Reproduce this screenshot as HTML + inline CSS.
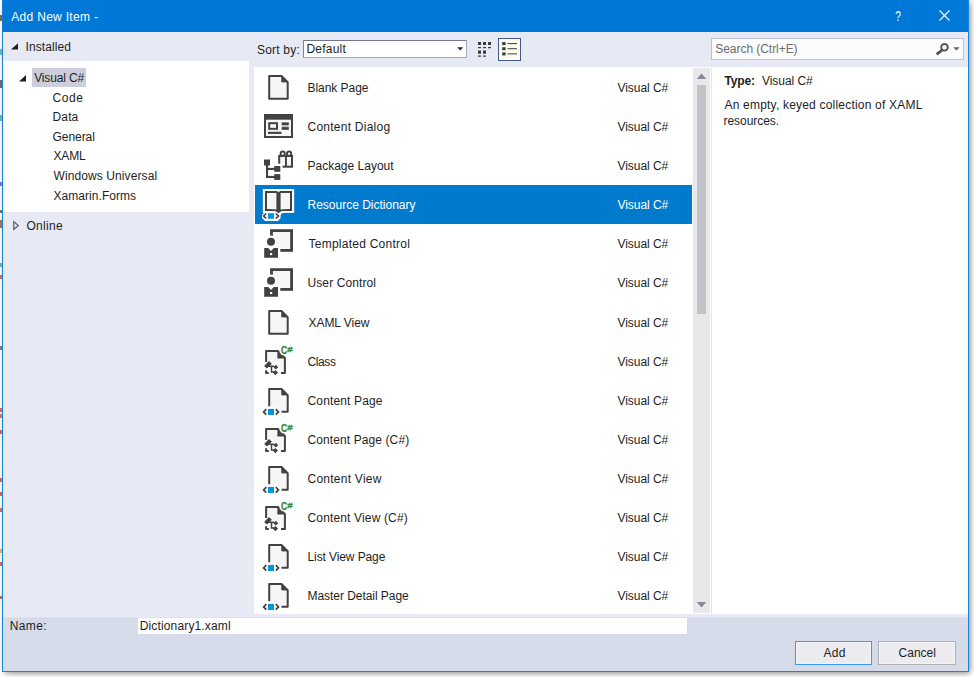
<!DOCTYPE html>
<html>
<head>
<meta charset="utf-8">
<title>Add New Item</title>
<style>
html,body{margin:0;padding:0;}
body{width:974px;height:677px;overflow:hidden;background:#fff;position:relative;
 font-family:"Liberation Sans",sans-serif;font-size:12px;color:#1e1e1e;}
div,span,svg{position:absolute;}
.tx{white-space:pre;line-height:14px;height:14px;}
#shadow{left:3px;top:0;width:965px;height:671px;box-shadow:2px 2px 6px 0 rgba(0,0,0,.5);}
#dlg{left:2px;top:0;width:967px;height:672px;background:#e7eaf5;}
#bl{left:2px;top:0;width:1px;height:672px;background:#1883d7;}
#br{left:968px;top:0;width:1px;height:672px;background:#1883d7;}
#bb{left:2px;top:671px;width:967px;height:1px;background:#1883d7;}
#title{left:2px;top:0;width:967px;height:32px;background:#0078d7;}
#tree{left:3px;top:61px;width:246px;height:151px;background:#fff;}
#treesel{left:32px;top:68px;width:54px;height:19px;background:#cccedb;}
#list{left:254px;top:67px;width:457px;height:547px;background:#fff;}
#sbar{left:693px;top:68px;width:17px;height:545px;background:#e8e8ec;}
#thumb{left:697px;top:85px;width:9px;height:229px;background:#c2c3c9;}
#sep{left:711px;top:67px;width:1px;height:547px;background:#e3e7f4;}
#detail{left:712px;top:67px;width:256px;height:547px;background:#fff;}
#bottom{left:3px;top:617px;width:965px;height:54px;background:#d6dbe9;border-top:1px solid #dde1ee;box-sizing:border-box;}
#name{left:138px;top:618px;width:549px;height:16px;background:#fff;}
.row{left:255px;width:437px;height:39px;}
.row.sel{background:#007acc;}
.row svg{left:4px;top:0;}
#combo{left:303px;top:40px;width:164px;height:18px;box-sizing:border-box;background:#fff;border:1px solid #a3abc0;border-top-color:#6f778b;border-left-color:#7d8599;}
#search{left:711px;top:38px;width:253px;height:22px;box-sizing:border-box;background:#fcfcfc;border:1px solid #b9c1d6;}
#lbtn{left:498px;top:38px;width:23px;height:23px;box-sizing:border-box;background:#fdfbee;border:1px solid #44598c;}
.btn{top:641px;width:77px;height:24px;box-sizing:border-box;background:#ecebf0;border:1px solid #b0b0b0;box-shadow:inset 0 0 0 1px rgba(255,255,255,.45);}
#add{left:795px;border-color:#3b9bf4;}
#cancel{left:878px;width:78px;}
</style>
</head>
<body>
<div id="shadow"></div>
<div style="left:0;top:15px;width:2px;height:6px;background:#4a3520;opacity:.75"></div><div style="left:0;top:49px;width:2px;height:6px;background:#3a9bb5;opacity:.75"></div><div style="left:0;top:80px;width:2px;height:8px;background:#3a3a3a;opacity:.75"></div><div style="left:0;top:115px;width:2px;height:6px;background:#3a9bb5;opacity:.75"></div><div style="left:0;top:182px;width:2px;height:4px;background:#3355dd;opacity:.75"></div><div style="left:0;top:210px;width:2px;height:3px;background:#444;opacity:.75"></div><div style="left:0;top:220px;width:2px;height:8px;background:#8a4a20;opacity:.75"></div><div style="left:0;top:263px;width:2px;height:4px;background:#3a9bb5;opacity:.75"></div><div style="left:0;top:275px;width:2px;height:4px;background:#c33;opacity:.75"></div><div style="left:0;top:346px;width:2px;height:4px;background:#555;opacity:.75"></div><div style="left:0;top:408px;width:2px;height:4px;background:#c33;opacity:.75"></div><div style="left:0;top:414px;width:2px;height:4px;background:#c44;opacity:.75"></div><div style="left:0;top:430px;width:2px;height:4px;background:#c33;opacity:.75"></div><div style="left:0;top:478px;width:2px;height:4px;background:#c33;opacity:.75"></div><div style="left:0;top:492px;width:2px;height:4px;background:#c33;opacity:.75"></div><div style="left:0;top:508px;width:2px;height:4px;background:#c33;opacity:.75"></div><div style="left:0;top:549px;width:2px;height:4px;background:#d84;opacity:.75"></div><div style="left:0;top:562px;width:2px;height:4px;background:#c33;opacity:.75"></div><div style="left:0;top:596px;width:2px;height:3px;background:#a33;opacity:.75"></div>
<div id="dlg"></div>
<div id="title"></div>
<svg id="tbtn" style="left:880px;top:0" width="88" height="32" viewBox="0 0 88 32">
 <path d="M59.5,10.5 L69.5,20.5 M69.5,10.5 L59.5,20.5" stroke="#fff" stroke-width="1.1" fill="none"/>
 <text x="15.3" y="21" font-family="Liberation Sans, sans-serif" font-size="15" fill="#fff" textLength="5.6" lengthAdjust="spacingAndGlyphs">?</text>
</svg>
<div id="tree"></div>
<div id="treesel"></div>
<svg style="left:8px;top:40px" width="20" height="200" viewBox="0 0 20 200">
 <path d="M10,9.6 V3.2 L3,9.6 Z" fill="#1e1e1e"/>
 <path d="M18,41.4 V35 L11,41.4 Z" fill="#1e1e1e"/>
 <path d="M5.8,181.6 L10.3,185.5 L5.8,189.4 Z" fill="none" stroke="#5a5a5a" stroke-width="1.2"/>
</svg>
<div id="combo"></div>
<svg style="left:455px;top:44px" width="12" height="10" viewBox="0 0 12 10"><path d="M2.2,3.2 H8.2 L5.2,6.4 Z" fill="#1b2a49"/></svg>
<svg style="left:474px;top:38px" width="22" height="23" viewBox="0 0 22 23" fill="#3a3a3a">
 <rect x="4" y="4" width="3" height="3"/><rect x="9" y="4" width="3" height="3"/><rect x="14" y="4" width="3" height="3"/>
 <rect x="4" y="9" width="3" height="1.2"/><rect x="9" y="9" width="3" height="1.2"/><rect x="14" y="9" width="3" height="1.2"/>
 <rect x="4" y="12.5" width="3" height="3.2"/><rect x="9" y="12.5" width="3" height="3.2"/>
 <rect x="4" y="17.5" width="3" height="1.2"/><rect x="9" y="17.5" width="3" height="1.2"/>
</svg>
<div id="lbtn"></div>
<svg style="left:498px;top:38px" width="23" height="23" viewBox="0 0 23 23" fill="#3a3a3a">
 <rect x="4.2" y="4.1" width="3.4" height="3"/><rect x="4.2" y="9.2" width="3.4" height="3"/><rect x="4.2" y="14.4" width="3.4" height="3"/>
 <rect x="9.5" y="5.1" width="9.5" height="1"/><rect x="9.5" y="10.2" width="9.5" height="1"/><rect x="9.5" y="15.2" width="9.5" height="1.3" fill="#6a6a6a"/>
</svg>
<div id="search"></div>
<svg style="left:930px;top:38px" width="34" height="22" viewBox="0 0 34 22">
 <circle cx="14.5" cy="9.3" r="3.3" fill="none" stroke="#555" stroke-width="1.9"/>
 <path d="M12.3,11.9 L6.6,16.4" stroke="#555" stroke-width="2.7" fill="none"/>
 <path d="M23.2,9.2 H29.6 L26.4,12.6 Z" fill="#666"/>
</svg>
<div id="list"></div>
<div class="row" style="top:68px"><svg width="40" height="39" viewBox="0 0 40 39"><path d="M10.2,8 H22.5 L28.7,14.2 V30.8 H10.2 Z" fill="#f6f6f6" stroke="#424242" stroke-width="2" stroke-linejoin="round"/><path d="M22.8,8 V13.899999999999999 H28.7 Z" fill="#424242" stroke="#424242" stroke-width="1" stroke-linejoin="round"/></svg></div>
<div class="row" style="top:107px"><svg width="40" height="39" viewBox="0 0 40 39"><rect x="5" y="7" width="29" height="24" fill="#424242"/><rect x="7" y="12.7" width="25" height="16.3" fill="#f6f6f6"/><rect x="10.2" y="16.2" width="7.8" height="5.6" fill="#fff" stroke="#424242" stroke-width="2"/><rect x="22.7" y="15.4" width="7.1" height="2.7" fill="#424242"/><rect x="22.7" y="18.1" width="7.1" height="2" fill="#bdbdbd"/><rect x="22.7" y="20.1" width="7.1" height="2.7" fill="#424242"/><rect x="9" y="24.8" width="13.5" height="2.1" fill="#424242"/></svg></div>
<div class="row" style="top:146px"><svg width="40" height="39" viewBox="0 0 40 39"><rect x="20.2" y="9.9" width="12.8" height="10.8" fill="#f6f6f6" stroke="#424242" stroke-width="2"/><rect x="26" y="10" width="1.9" height="10" fill="#424242"/><ellipse cx="23.7" cy="7.7" rx="2.1" ry="2.2" fill="none" stroke="#424242" stroke-width="1.9"/><ellipse cx="30.1" cy="7.7" rx="2.1" ry="2.2" fill="none" stroke="#424242" stroke-width="1.9"/><rect x="13.5" y="17.7" width="10" height="17" fill="#fff"/><rect x="5" y="13.5" width="6" height="6" fill="#424242"/><rect x="7" y="19" width="2.1" height="13" fill="#424242"/><rect x="8" y="21.9" width="8" height="2.1" fill="#424242"/><rect x="8" y="29.9" width="8" height="2.1" fill="#424242"/><rect x="15.2" y="20" width="6.1" height="5.8" fill="#424242"/><rect x="15.2" y="28.1" width="6.1" height="5.8" fill="#424242"/></svg></div>
<div class="row sel" style="top:185px"><svg width="40" height="39" viewBox="0 0 40 39"><rect x="3.8" y="4" width="31.4" height="23.9" fill="#fff"/><path d="M6,27 H21.6 V33 L19,36 H6 L3,33 V30 Z" fill="#fff"/><path d="M15,25 H24 V28.5 H22 V30 H17 V28.5 H15 Z" fill="#fff"/><path d="M6,6 H17.6 L19.5,7 L21.4,6 H33 V25.9 H24 Q22,26 21.2,27 L19.5,28.3 L17.8,27 Q17,26 15,25.9 H6 Z" fill="#424242"/><path d="M8,8 H17.4 V24.5 Q15,23.8 8,23.9 Z" fill="#f6f6f6"/><path d="M31,8 H21.6 V24.5 Q24,23.8 31,23.9 Z" fill="#f6f6f6"/><path d="M7.3,28.5 L4.6,31.0 L7.3,33.5" fill="none" stroke="#424242" stroke-width="1.7"/><rect x="8.9" y="28.2" width="6.1" height="5.599999999999998" fill="#0496dc"/><path d="M16.8,28.5 L19.5,31.0 L16.8,33.5" fill="none" stroke="#424242" stroke-width="1.7"/></svg></div>
<div class="row" style="top:224px"><svg width="40" height="39" viewBox="0 0 40 39"><rect x="12.5" y="6.6" width="20.1" height="19.8" fill="#f6f6f6" stroke="#424242" stroke-width="2.8"/><rect x="3" y="11.6" width="10.9" height="24" fill="#fff"/><rect x="10" y="22.7" width="11.3" height="12" fill="#fff"/><circle cx="12" cy="17.7" r="5.6" fill="#fff"/><circle cx="12" cy="17.7" r="4" fill="#424242"/><path d="M5.2,24.1 H9.2 L12,27 L14.8,24.1 H19 V33.8 H5.2 Z" fill="#424242"/><rect x="11" y="29" width="2.2" height="2.1" fill="#fff"/></svg></div>
<div class="row" style="top:263px"><svg width="40" height="39" viewBox="0 0 40 39"><rect x="12.5" y="6.6" width="20.1" height="19.8" fill="#f6f6f6" stroke="#424242" stroke-width="2.8"/><rect x="3" y="11.6" width="10.9" height="24" fill="#fff"/><rect x="10" y="22.7" width="11.3" height="12" fill="#fff"/><circle cx="12" cy="17.7" r="5.6" fill="#fff"/><circle cx="12" cy="17.7" r="4" fill="#424242"/><path d="M5.2,24.1 H9.2 L12,27 L14.8,24.1 H19 V33.8 H5.2 Z" fill="#424242"/><rect x="11" y="29" width="2.2" height="2.1" fill="#fff"/></svg></div>
<div class="row" style="top:303px"><svg width="40" height="39" viewBox="0 0 40 39"><path d="M10.2,8 H22.5 L28.7,14.2 V30.8 H10.2 Z" fill="#f6f6f6" stroke="#424242" stroke-width="2" stroke-linejoin="round"/><path d="M22.8,8 V13.899999999999999 H28.7 Z" fill="#424242" stroke="#424242" stroke-width="1" stroke-linejoin="round"/></svg></div>
<div class="row" style="top:342px"><svg width="40" height="39" viewBox="0 0 40 39"><g transform="translate(0,-1)"><path d="M7.1,9.9 H18.9 L25.9,16.9 V32.1 H7.1 Z" fill="#f6f6f6"/><path d="M7.1,21 V9.9 H18.9 L25.9,16.9 V32.1 H21.5" fill="none" stroke="#424242" stroke-width="2" stroke-linejoin="round"/><path d="M18.4,9.9 V17.4 H25.9 Z" fill="#424242"/><path d="M2,27 L10.5,18.5 L22,30 V35 H2 Z" fill="#fff"/><path d="M7.1,29.3 V32.1 H9.8" fill="none" stroke="#424242" stroke-width="2" stroke-linejoin="round"/><path d="M5.1,24.9 L10,20 L12.9,22.8 L8,27.5 Z" fill="#424242"/><path d="M9,25.2 H15 M12.5,25 V30.9 H15" fill="none" stroke="#424242" stroke-width="1.5"/><path d="M16.8,23.8 L19.2,26.2 L16.8,28.6 L14.4,26.2 Z" fill="#424242"/><path d="M16.4,29 L19,31.6 L16.4,34.2 L13.8,31.6 Z" fill="#424242"/><path d="M20.6,4.5 H35.5 V12.5 H29.5 V14.2 H23 L20.6,11.5 Z" fill="#fff"/><g font-family="Liberation Sans, sans-serif" font-weight="bold" fill="#388a34" stroke="#388a34" stroke-width="0.35"><text transform="translate(22,12.8) scale(0.84,1)" font-size="10.2">C</text><text transform="translate(28.3,11.2) scale(1.28,1)" font-size="7.6">#</text></g></g></svg></div>
<div class="row" style="top:381px"><svg width="40" height="39" viewBox="0 0 40 39"><path d="M10.2,8 H22.5 L28.7,14.2 V30.8 H10.2 Z" fill="#f6f6f6" stroke="none"/><path d="M2,26.3 H19 L22.5,29.5 V36 H2 Z" fill="#fff"/><path d="M10.2,25.3 V8 H22.5 L28.7,14.2 V30.8 H22.5" fill="none" stroke="#424242" stroke-width="2" stroke-linejoin="round"/><path d="M22.8,8 V13.899999999999999 H28.7 Z" fill="#424242" stroke="#424242" stroke-width="1" stroke-linejoin="round"/><path d="M7.3,28.2 L4.6,30.95 L7.3,33.7" fill="none" stroke="#424242" stroke-width="1.7"/><rect x="8.9" y="27.9" width="6.1" height="6.100000000000001" fill="#0496dc"/><path d="M16.8,28.2 L19.5,30.95 L16.8,33.7" fill="none" stroke="#424242" stroke-width="1.7"/></svg></div>
<div class="row" style="top:420px"><svg width="40" height="39" viewBox="0 0 40 39"><g transform="translate(0,-1)"><path d="M7.1,9.9 H18.9 L25.9,16.9 V32.1 H7.1 Z" fill="#f6f6f6"/><path d="M7.1,21 V9.9 H18.9 L25.9,16.9 V32.1 H21.5" fill="none" stroke="#424242" stroke-width="2" stroke-linejoin="round"/><path d="M18.4,9.9 V17.4 H25.9 Z" fill="#424242"/><path d="M2,27 L10.5,18.5 L22,30 V35 H2 Z" fill="#fff"/><path d="M7.1,29.3 V32.1 H9.8" fill="none" stroke="#424242" stroke-width="2" stroke-linejoin="round"/><path d="M5.1,24.9 L10,20 L12.9,22.8 L8,27.5 Z" fill="#424242"/><path d="M9,25.2 H15 M12.5,25 V30.9 H15" fill="none" stroke="#424242" stroke-width="1.5"/><path d="M16.8,23.8 L19.2,26.2 L16.8,28.6 L14.4,26.2 Z" fill="#424242"/><path d="M16.4,29 L19,31.6 L16.4,34.2 L13.8,31.6 Z" fill="#424242"/><path d="M20.6,4.5 H35.5 V12.5 H29.5 V14.2 H23 L20.6,11.5 Z" fill="#fff"/><g font-family="Liberation Sans, sans-serif" font-weight="bold" fill="#388a34" stroke="#388a34" stroke-width="0.35"><text transform="translate(22,12.8) scale(0.84,1)" font-size="10.2">C</text><text transform="translate(28.3,11.2) scale(1.28,1)" font-size="7.6">#</text></g></g></svg></div>
<div class="row" style="top:459px"><svg width="40" height="39" viewBox="0 0 40 39"><path d="M10.2,8 H22.5 L28.7,14.2 V30.8 H10.2 Z" fill="#f6f6f6" stroke="none"/><path d="M2,26.3 H19 L22.5,29.5 V36 H2 Z" fill="#fff"/><path d="M10.2,25.3 V8 H22.5 L28.7,14.2 V30.8 H22.5" fill="none" stroke="#424242" stroke-width="2" stroke-linejoin="round"/><path d="M22.8,8 V13.899999999999999 H28.7 Z" fill="#424242" stroke="#424242" stroke-width="1" stroke-linejoin="round"/><path d="M7.3,28.2 L4.6,30.95 L7.3,33.7" fill="none" stroke="#424242" stroke-width="1.7"/><rect x="8.9" y="27.9" width="6.1" height="6.100000000000001" fill="#0496dc"/><path d="M16.8,28.2 L19.5,30.95 L16.8,33.7" fill="none" stroke="#424242" stroke-width="1.7"/></svg></div>
<div class="row" style="top:498px"><svg width="40" height="39" viewBox="0 0 40 39"><g transform="translate(0,-1)"><path d="M7.1,9.9 H18.9 L25.9,16.9 V32.1 H7.1 Z" fill="#f6f6f6"/><path d="M7.1,21 V9.9 H18.9 L25.9,16.9 V32.1 H21.5" fill="none" stroke="#424242" stroke-width="2" stroke-linejoin="round"/><path d="M18.4,9.9 V17.4 H25.9 Z" fill="#424242"/><path d="M2,27 L10.5,18.5 L22,30 V35 H2 Z" fill="#fff"/><path d="M7.1,29.3 V32.1 H9.8" fill="none" stroke="#424242" stroke-width="2" stroke-linejoin="round"/><path d="M5.1,24.9 L10,20 L12.9,22.8 L8,27.5 Z" fill="#424242"/><path d="M9,25.2 H15 M12.5,25 V30.9 H15" fill="none" stroke="#424242" stroke-width="1.5"/><path d="M16.8,23.8 L19.2,26.2 L16.8,28.6 L14.4,26.2 Z" fill="#424242"/><path d="M16.4,29 L19,31.6 L16.4,34.2 L13.8,31.6 Z" fill="#424242"/><path d="M20.6,4.5 H35.5 V12.5 H29.5 V14.2 H23 L20.6,11.5 Z" fill="#fff"/><g font-family="Liberation Sans, sans-serif" font-weight="bold" fill="#388a34" stroke="#388a34" stroke-width="0.35"><text transform="translate(22,12.8) scale(0.84,1)" font-size="10.2">C</text><text transform="translate(28.3,11.2) scale(1.28,1)" font-size="7.6">#</text></g></g></svg></div>
<div class="row" style="top:537px"><svg width="40" height="39" viewBox="0 0 40 39"><path d="M10.2,8 H22.5 L28.7,14.2 V30.8 H10.2 Z" fill="#f6f6f6" stroke="none"/><path d="M2,26.3 H19 L22.5,29.5 V36 H2 Z" fill="#fff"/><path d="M10.2,25.3 V8 H22.5 L28.7,14.2 V30.8 H22.5" fill="none" stroke="#424242" stroke-width="2" stroke-linejoin="round"/><path d="M22.8,8 V13.899999999999999 H28.7 Z" fill="#424242" stroke="#424242" stroke-width="1" stroke-linejoin="round"/><path d="M7.3,28.2 L4.6,30.95 L7.3,33.7" fill="none" stroke="#424242" stroke-width="1.7"/><rect x="8.9" y="27.9" width="6.1" height="6.100000000000001" fill="#0496dc"/><path d="M16.8,28.2 L19.5,30.95 L16.8,33.7" fill="none" stroke="#424242" stroke-width="1.7"/></svg></div>
<div class="row" style="top:576px"><svg width="40" height="39" viewBox="0 0 40 39"><path d="M10.2,8 H22.5 L28.7,14.2 V30.8 H10.2 Z" fill="#f6f6f6" stroke="none"/><path d="M2,26.3 H19 L22.5,29.5 V36 H2 Z" fill="#fff"/><path d="M10.2,25.3 V8 H22.5 L28.7,14.2 V30.8 H22.5" fill="none" stroke="#424242" stroke-width="2" stroke-linejoin="round"/><path d="M22.8,8 V13.899999999999999 H28.7 Z" fill="#424242" stroke="#424242" stroke-width="1" stroke-linejoin="round"/><path d="M7.3,28.2 L4.6,30.95 L7.3,33.7" fill="none" stroke="#424242" stroke-width="1.7"/><rect x="8.9" y="27.9" width="6.1" height="6.100000000000001" fill="#0496dc"/><path d="M16.8,28.2 L19.5,30.95 L16.8,33.7" fill="none" stroke="#424242" stroke-width="1.7"/></svg></div>
<div id="sbar"></div>
<div id="thumb"></div>
<svg style="left:693px;top:68px" width="17" height="545" viewBox="0 0 17 545">
 <path d="M3.7,11 H13.3 L8.5,5.6 Z" fill="#868999"/>
 <path d="M3.7,534 H13.3 L8.5,539.4 Z" fill="#868999"/>
</svg>
<div id="sep"></div>
<div id="detail"></div>
<div id="bottom"></div>
<div id="name"></div>
<div id="add" class="btn"></div>
<div id="cancel" class="btn"></div>
<div id="bl"></div><div id="br"></div><div id="bb"></div>
<span class="tx" style="left:11.30px;top:10px;color:#ffffff;letter-spacing:0.3px;">Add New Item -</span>
<span class="tx" style="left:25.50px;top:40px;color:#1e1e1e;letter-spacing:0.1px;">Installed</span>
<span class="tx" style="left:34.20px;top:71px;color:#1e1e1e;letter-spacing:-0.15px;">Visual C#</span>
<span class="tx" style="left:52.50px;top:91px;color:#1e1e1e;letter-spacing:0.55px;">Code</span>
<span class="tx" style="left:52.50px;top:110px;color:#1e1e1e;letter-spacing:0.15px;">Data</span>
<span class="tx" style="left:52.50px;top:130px;color:#1e1e1e;letter-spacing:-0.05px;">General</span>
<span class="tx" style="left:53.50px;top:149px;color:#1e1e1e;letter-spacing:-0.15px;">XAML</span>
<span class="tx" style="left:53.50px;top:169px;color:#1e1e1e;letter-spacing:0.1px;">Windows Universal</span>
<span class="tx" style="left:53.50px;top:189px;color:#1e1e1e;letter-spacing:0.05px;">Xamarin.Forms</span>
<span class="tx" style="left:26.40px;top:219px;color:#1e1e1e;letter-spacing:0.3px;">Online</span>
<span class="tx" style="left:257.00px;top:43px;color:#1e1e1e;letter-spacing:0.2px;">Sort by:</span>
<span class="tx" style="left:306.50px;top:42px;color:#1e1e1e;letter-spacing:0.2px;">Default</span>
<span class="tx" style="left:715.30px;top:42px;color:#6d6d6d;letter-spacing:-0.05px;">Search (Ctrl+E)</span>
<span class="tx" style="left:307.50px;top:81px;color:#1e1e1e;letter-spacing:-0.05px;">Blank Page</span>
<span class="tx" style="left:617.50px;top:81px;color:#1e1e1e;letter-spacing:-0.05px;">Visual C#</span>
<span class="tx" style="left:307.50px;top:120px;color:#1e1e1e;letter-spacing:0.25px;">Content Dialog</span>
<span class="tx" style="left:617.50px;top:120px;color:#1e1e1e;letter-spacing:-0.05px;">Visual C#</span>
<span class="tx" style="left:307.50px;top:159px;color:#1e1e1e;">Package Layout</span>
<span class="tx" style="left:617.50px;top:159px;color:#1e1e1e;letter-spacing:-0.05px;">Visual C#</span>
<span class="tx" style="left:307.50px;top:198px;color:#ffffff;">Resource Dictionary</span>
<span class="tx" style="left:617.50px;top:198px;color:#ffffff;letter-spacing:-0.05px;">Visual C#</span>
<span class="tx" style="left:308.50px;top:237px;color:#1e1e1e;letter-spacing:0.25px;">Templated Control</span>
<span class="tx" style="left:617.50px;top:237px;color:#1e1e1e;letter-spacing:-0.05px;">Visual C#</span>
<span class="tx" style="left:307.50px;top:276px;color:#1e1e1e;letter-spacing:0.1px;">User Control</span>
<span class="tx" style="left:617.50px;top:276px;color:#1e1e1e;letter-spacing:-0.05px;">Visual C#</span>
<span class="tx" style="left:308.50px;top:316px;color:#1e1e1e;letter-spacing:-0.05px;">XAML View</span>
<span class="tx" style="left:617.50px;top:316px;color:#1e1e1e;letter-spacing:-0.05px;">Visual C#</span>
<span class="tx" style="left:307.50px;top:355px;color:#1e1e1e;letter-spacing:-0.4px;">Class</span>
<span class="tx" style="left:617.50px;top:355px;color:#1e1e1e;letter-spacing:-0.05px;">Visual C#</span>
<span class="tx" style="left:307.50px;top:394px;color:#1e1e1e;letter-spacing:0.15px;">Content Page</span>
<span class="tx" style="left:617.50px;top:394px;color:#1e1e1e;letter-spacing:-0.05px;">Visual C#</span>
<span class="tx" style="left:307.50px;top:433px;color:#1e1e1e;letter-spacing:0.1px;">Content Page (C#)</span>
<span class="tx" style="left:617.50px;top:433px;color:#1e1e1e;letter-spacing:-0.05px;">Visual C#</span>
<span class="tx" style="left:307.50px;top:472px;color:#1e1e1e;letter-spacing:0.25px;">Content View</span>
<span class="tx" style="left:617.50px;top:472px;color:#1e1e1e;letter-spacing:-0.05px;">Visual C#</span>
<span class="tx" style="left:307.50px;top:511px;color:#1e1e1e;letter-spacing:0.15px;">Content View (C#)</span>
<span class="tx" style="left:617.50px;top:511px;color:#1e1e1e;letter-spacing:-0.05px;">Visual C#</span>
<span class="tx" style="left:307.50px;top:550px;color:#1e1e1e;letter-spacing:-0.1px;">List View Page</span>
<span class="tx" style="left:617.50px;top:550px;color:#1e1e1e;letter-spacing:-0.05px;">Visual C#</span>
<span class="tx" style="left:307.50px;top:589px;color:#1e1e1e;letter-spacing:-0.05px;">Master Detail Page</span>
<span class="tx" style="left:617.50px;top:589px;color:#1e1e1e;letter-spacing:-0.05px;">Visual C#</span>
<span class="tx" style="left:724.50px;top:74px;color:#1e1e1e;letter-spacing:-0.15px;font-weight:bold;">Type:</span>
<span class="tx" style="left:762.00px;top:74px;color:#1e1e1e;letter-spacing:-0.05px;">Visual C#</span>
<span class="tx" style="left:724.50px;top:98px;color:#1e1e1e;letter-spacing:0.2px;">An empty, keyed collection of XAML</span>
<span class="tx" style="left:723.50px;top:114px;color:#1e1e1e;letter-spacing:-0.05px;">resources.</span>
<span class="tx" style="left:9.70px;top:619px;color:#1e1e1e;letter-spacing:0.4px;">Name:</span>
<span class="tx" style="left:139.70px;top:619px;color:#1e1e1e;letter-spacing:0.15px;">Dictionary1.xaml</span>
<span class="tx" style="left:823.40px;top:646px;color:#1e1e1e;letter-spacing:0.3px;">Add</span>
<span class="tx" style="left:898.60px;top:646px;color:#1e1e1e;">Cancel</span>
</body>
</html>
